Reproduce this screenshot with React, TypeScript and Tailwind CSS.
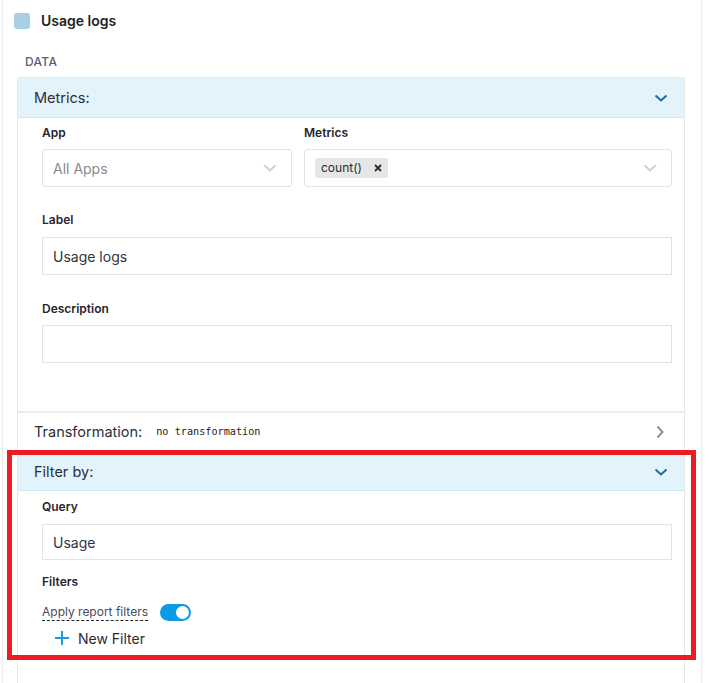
import React from "react";

const ChevronDown = ({ className }: { className?: string }) => (
    <svg width="14" height="8" viewBox="0 0 14 8" fill="none" className={className}>
        <path d="M1.5 1.5 L7 6.5 L12.5 1.5" stroke="currentColor" strokeWidth="2" />
    </svg>
);

const ChevronRight = () => (
    <svg width="8" height="14" viewBox="0 0 8 14" fill="none" className="text-[#8b909c]">
        <path d="M1.5 1.5 L6.5 7 L1.5 12.5" stroke="currentColor" strokeWidth="2" />
    </svg>
);

const FieldLabel = ({ children }: { children: React.ReactNode }) => (
    <div className="h-4 leading-4 text-[12px] font-semibold text-[#26262e]">{children}</div>
);

const App = () => {
    return (
        <div className="relative w-[709px] h-[683px] overflow-hidden bg-white font-['Inter',sans-serif] text-[#2b2b35]">
            <div className="ml-[2px] w-[700px] h-full border-x border-[#ececec] flex flex-col">
                {/* title */}
                <div className="flex items-center pt-[12px] pl-[11px] gap-[11px] h-[29px]">
                    <div className="w-4 h-4 rounded-[3px] bg-[#a8cfe3]" />
                    <div className="text-[14px] font-semibold text-[#222] leading-4">Usage logs</div>
                </div>
                <div className="mt-[25px] pl-[22px] h-4 leading-4 text-[12px] font-medium tracking-[0.3px] text-[#5b5b6e]">DATA</div>

                {/* card */}
                <div className="mt-[7px] ml-[14px] mr-[16px] flex-1 border-x border-t border-[#e8e8e8] rounded-t-[3px] flex flex-col">
                    <div className="h-[40px] shrink-0 bg-[#e3f3fc] border-b border-[#cce7f6] flex items-center justify-between pl-[16px] pr-[16px]">
                        <span className="text-[14.5px] text-[#2a2f3a]">Metrics:</span>
                        <ChevronDown className="text-[#1f6b96]" />
                    </div>

                    <div className="pl-[24px] pr-[12px] pt-[7px] pb-[48px]">
                        <div className="flex gap-[12px]">
                            <div className="w-[250px]">
                                <FieldLabel>App</FieldLabel>
                                <div className="mt-[8px] h-[38px] border border-[#e3e3e3] rounded-[3px] flex items-center justify-between pl-[10px] pr-[14px]">
                                    <span className="text-[14px] text-[#8a8a94]">All Apps</span>
                                    <ChevronDown className="text-[#cfcfcf]" />
                                </div>
                            </div>
                            <div className="flex-1">
                                <FieldLabel>Metrics</FieldLabel>
                                <div className="mt-[8px] h-[38px] border border-[#e3e3e3] rounded-[3px] flex items-center justify-between pl-[10px] pr-[14px]">
                                    <span className="h-[20px] flex items-center gap-[12px] rounded-[2px] bg-[#e6e6e6] px-[6px] text-[12px] text-[#2a2a33]">
                                        count()
                                        <svg width="8" height="8" viewBox="0 0 8 8" className="text-[#2a2a33]">
                                            <path d="M1 1 L7 7 M7 1 L1 7" stroke="currentColor" strokeWidth="1.8" />
                                        </svg>
                                    </span>
                                    <ChevronDown className="text-[#cfcfcf]" />
                                </div>
                            </div>
                        </div>

                        <div className="mt-[25px]">
                            <FieldLabel>Label</FieldLabel>
                            <div className="mt-[9px] h-[38px] border border-[#e3e3e3] flex items-center pl-[10px] text-[14px] text-[#33333d]">
                                Usage logs
                            </div>
                        </div>

                        <div className="mt-[26px]">
                            <FieldLabel>Description</FieldLabel>
                            <div className="mt-[8px] h-[38px] border border-[#e3e3e3]" />
                        </div>
                    </div>

                    {/* transformation */}
                    <div className="h-[39px] shrink-0 border-t-2 border-[#ededed] flex items-center justify-between pl-[16px] pr-[20px]">
                        <div className="flex items-center gap-[14px]">
                            <span className="text-[14.5px] text-[#2a2f3a]">Transformation:</span>
                            <span className="font-['DejaVu_Sans_Mono',monospace] text-[10.2px] text-[#222]">no transformation</span>
                        </div>
                        <ChevronRight />
                    </div>

                    {/* filter by */}
                    <div className="h-[41px] shrink-0 bg-[#e3f3fc] border-b border-[#cce7f6] flex items-end justify-between pl-[16px] pr-[16px] pb-[8px]">
                        <span className="text-[14.5px] text-[#2a2f3a] leading-5">Filter by:</span>
                        <ChevronDown className="text-[#1f6b96] mb-[6px]" />
                    </div>

                    <div className="pl-[24px] pr-[12px] pt-[8px]">
                        <FieldLabel>Query</FieldLabel>
                        <div className="mt-[9px] h-[36px] border border-[#e3e3e3] flex items-center pl-[10px] text-[14px] text-[#33333d]">
                            Usage
                        </div>
                        <div className="mt-[14px]">
                            <FieldLabel>Filters</FieldLabel>
                        </div>
                        <div className="mt-[14px] flex items-center gap-[12px]">
                            <span className="text-[12px] leading-4 text-[#4a4a58] border-b border-dashed border-[#222]">
                                Apply report filters
                            </span>
                            <span className="w-[31px] h-[17px] rounded-full bg-[#0b9be5] flex items-center justify-end pr-[2px]">
                                <span className="w-[13px] h-[13px] rounded-full bg-white" />
                            </span>
                        </div>
                        <div className="mt-[7px] flex items-center gap-[9px] pl-[13px] h-[20px]">
                            <svg width="14" height="14" viewBox="0 0 14 14" className="text-[#1d9be0]">
                                <path d="M7 0 V14 M0 7 H14" stroke="currentColor" strokeWidth="2" />
                            </svg>
                            <span className="text-[14px] text-[#2a2a33]">New Filter</span>
                        </div>
                    </div>
                </div>
            </div>

            {/* annotation */}
            <div className="absolute left-[7px] top-[450px] w-[689px] h-[210px] border-[5px] border-[#ed1c24] pointer-events-none" />
        </div>
    );
};

export default App;
